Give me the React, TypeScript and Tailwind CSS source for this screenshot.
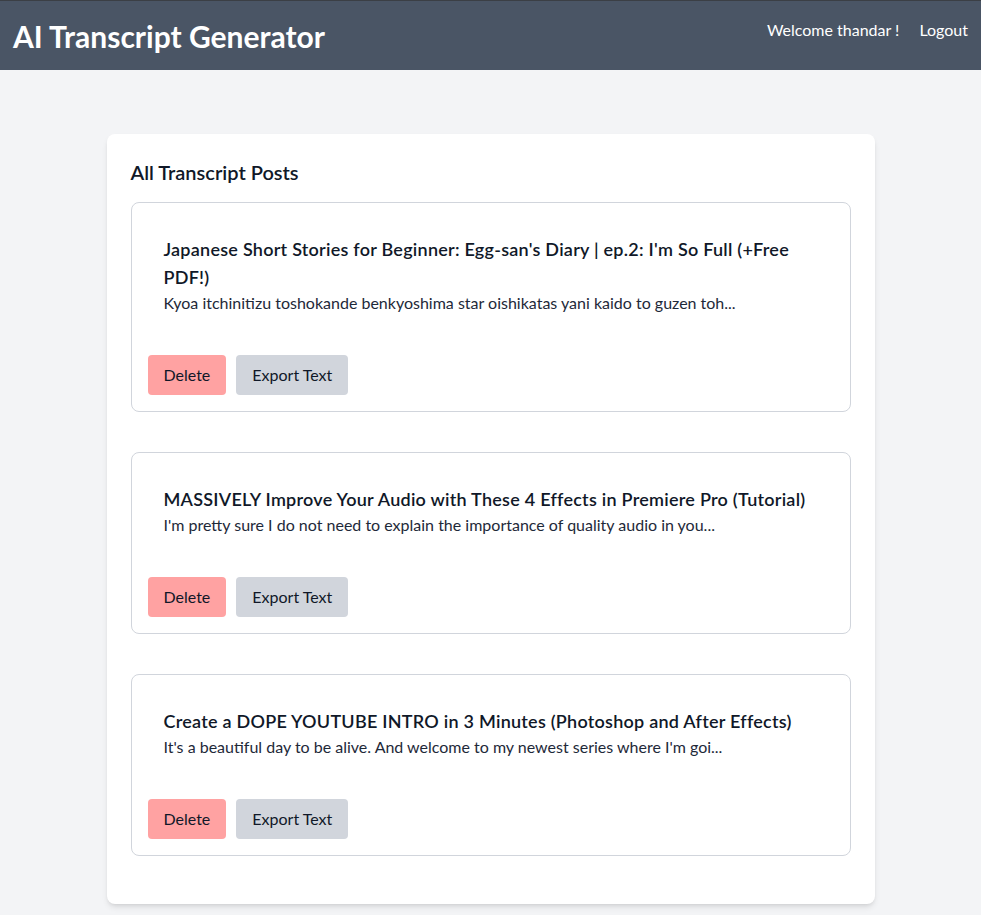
const posts = [
  {
    title: "Japanese Short Stories for Beginner: Egg-san's Diary | ep.2: I'm So Full (+Free PDF!)",
    text: "Kyoa itchinitizu toshokande benkyoshima star oishikatas yani kaido to guzen toh...",
  },
  {
    title: "MASSIVELY Improve Your Audio with These 4 Effects in Premiere Pro (Tutorial)",
    text: "I'm pretty sure I do not need to explain the importance of quality audio in you...",
  },
  {
    title: "Create a DOPE YOUTUBE INTRO in 3 Minutes (Photoshop and After Effects)",
    text: "It's a beautiful day to be alive. And welcome to my newest series where I'm goi...",
  },
]

function PostCard({ title, text }: { title: string; text: string }) {
  return (
    <div className="border border-gray-300 rounded-lg p-4">
      <div className="p-4">
        <h3 className="text-lg font-semibold leading-7 tracking-[0.25px] text-gray-900">{title}</h3>
        <p className="text-base leading-6 text-gray-800">{text}</p>
      </div>
      <div className="mt-6 flex gap-[10px]">
        <button className="bg-red-300 text-gray-900 px-4 h-10 rounded">Delete</button>
        <button className="bg-gray-300 text-gray-900 px-4 h-10 rounded">Export Text</button>
      </div>
    </div>
  )
}

export default function App() {
  return (
    <div
      className="min-h-screen bg-gray-100"
      style={{ fontFamily: 'Lato, "Noto Sans", sans-serif' }}
    >
      <header className="h-[70px] bg-gray-600 border-t border-[#3b3f45] flex items-center justify-between px-[13px] text-white">
        <h1 className="text-3xl font-bold">AI Transcript Generator</h1>
        <div className="self-start pt-[17px] flex items-center gap-5 text-base">
          <span>Welcome thandar !</span>
          <button>Logout</button>
        </div>
      </header>
      <main className="pt-16 pb-2">
        <div className="w-[768px] mx-auto bg-white rounded-lg shadow-md px-6 pt-6 pb-12">
          <h2 className="text-xl font-semibold text-gray-900 mb-4">All Transcript Posts</h2>
          <div className="flex flex-col gap-10">
            {posts.map((p) => (
              <PostCard key={p.title} title={p.title} text={p.text} />
            ))}
          </div>
        </div>
      </main>
    </div>
  )
}
